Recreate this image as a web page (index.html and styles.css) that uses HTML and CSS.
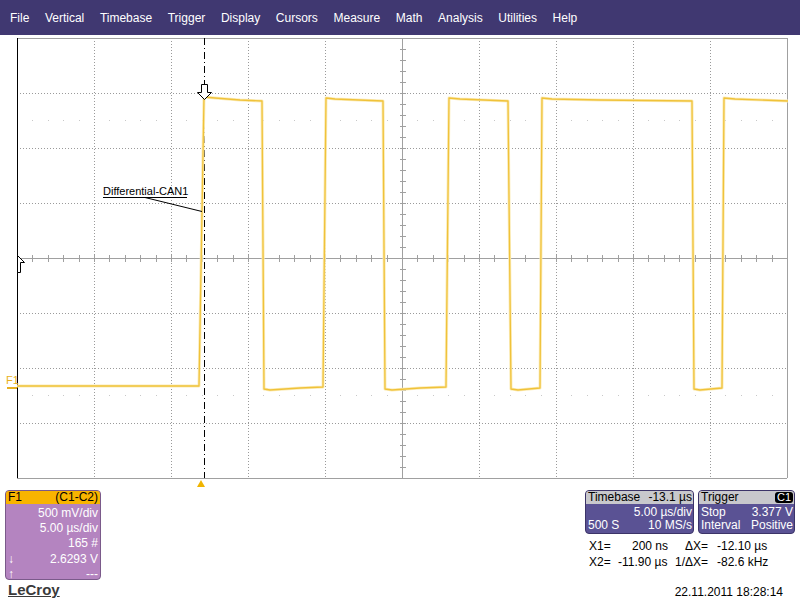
FILE: index.html
```html
<!DOCTYPE html>
<html>
<head>
<meta charset="utf-8">
<link rel="stylesheet" href="styles.css">
</head>
<body>
<div class="menubar">
  <span>File</span><span>Vertical</span><span>Timebase</span><span>Trigger</span><span>Display</span><span>Cursors</span><span>Measure</span><span>Math</span><span>Analysis</span><span>Utilities</span><span>Help</span>
</div>
<svg class="scope" width="800" height="455" viewBox="0 35 800 455" xmlns="http://www.w3.org/2000/svg">
  <g class="grid">
    <line x1="94" y1="38" x2="94" y2="478"/>
    <line x1="171" y1="38" x2="171" y2="478"/>
    <line x1="248" y1="38" x2="248" y2="478"/>
    <line x1="325" y1="38" x2="325" y2="478"/>
    <line x1="479" y1="38" x2="479" y2="478"/>
    <line x1="556" y1="38" x2="556" y2="478"/>
    <line x1="633" y1="38" x2="633" y2="478"/>
    <line x1="710" y1="38" x2="710" y2="478"/>
    <line x1="17" y1="93" x2="787" y2="93"/>
    <line x1="17" y1="148" x2="787" y2="148"/>
    <line x1="17" y1="203" x2="787" y2="203"/>
    <line x1="17" y1="313" x2="787" y2="313"/>
    <line x1="17" y1="368" x2="787" y2="368"/>
    <line x1="17" y1="423" x2="787" y2="423"/>
  </g>
  <g class="minor" id="minor"></g>
  <g class="axis">
    <line x1="17" y1="38.5" x2="787" y2="38.5"/>
    <line x1="17" y1="478.5" x2="787" y2="478.5"/>
    <line x1="787.5" y1="38" x2="787.5" y2="478"/>
    <line x1="17" y1="258.5" x2="787" y2="258.5"/>
    <line x1="402.5" y1="38" x2="402.5" y2="478"/>
  </g>
  <g class="ticks" id="ticks"></g>
  <line class="border-left" x1="17.5" y1="38" x2="17.5" y2="478"/>
  <line class="trigline" x1="204.5" y1="38" x2="204.5" y2="478"/>
  <polyline class="trace-glow" points="17,386 199,386 204,97 215,98 240,100 262,101 264,389 270,390 300,388 323,387 326,98 335,99 383,101 385,389 392,390 420,388 446,387 449,98 460,99 508,101 511,389 518,390 540,388 542,98 552,99 600,100 692,101 694,389 700,390 722,388 724,98 735,99 788,101"/>
  <polyline class="trace" points="17,386 199,386 204,97 215,98 240,100 262,101 264,389 270,390 300,388 323,387 326,98 335,99 383,101 385,389 392,390 420,388 446,387 449,98 460,99 508,101 511,389 518,390 540,388 542,98 552,99 600,100 692,101 694,389 700,390 722,388 724,98 735,99 788,101"/>
  <path class="trigarrow" d="M201.5,84.5 H207.5 V92.5 H211.5 L204.5,99.5 L197.5,92.5 H201.5 Z"/>
  <path class="gndmark" d="M17.5,255.5 L24.5,262.5 H20.5 V272.5 H17.5 Z"/>
  <polygon class="trigtri" points="197,487 201,480 205,487"/>
  <line class="f1tick" x1="7" y1="388" x2="17" y2="388"/>
  <text class="f1label" x="6" y="384">F1</text>
  <text class="tracelabel" x="103" y="195">Differential-CAN1</text>
  <line class="leader" x1="103" y1="197.5" x2="187" y2="197.5"/>
  <line class="leader" x1="145" y1="197.5" x2="202" y2="211.5"/>
</svg>
<div class="bottom">
  <div class="leftcol">
    <div class="f1panel">
      <div class="f1head"><span>F1</span><span>(C1-C2)</span></div>
      <div class="f1body">
        <div class="row right">500 mV/div</div>
        <div class="row right">5.00 µs/div</div>
        <div class="row right">165 #</div>
        <div class="row split gapped"><span>↓</span><span>2.6293 V</span></div>
        <div class="row split"><span>↑</span><span>---</span></div>
      </div>
    </div>
    <div class="logo">LeCroy</div>
  </div>
  <div class="rightcol">
    <div class="panels">
      <div class="panel tb">
        <div class="phead split"><span>Timebase</span><span>-13.1 µs</span></div>
        <div class="pbody">
          <div class="prow right">5.00 µs/div</div>
          <div class="prow split"><span>500 S</span><span>10 MS/s</span></div>
        </div>
      </div>
      <div class="panel trig">
        <div class="phead split"><span>Trigger</span><span class="badge">C1</span></div>
        <div class="pbody">
          <div class="prow split"><span>Stop</span><span>3.377 V</span></div>
          <div class="prow split"><span>Interval</span><span>Positive</span></div>
        </div>
      </div>
    </div>
    <div class="readouts">
      <span class="c1">X1=</span><span class="c2">200 ns</span><span class="c3">ΔX=</span><span class="c4">-12.10 µs</span>
      <span class="c1">X2=</span><span class="c2 b">-11.90 µs</span><span class="c3">1/ΔX=</span><span class="c4">-82.6 kHz</span>
    </div>
    <div class="date">22.11.2011 18:28:14</div>
  </div>
</div>
<script src="script.js"></script>
</body>
</html>
```

FILE: script.js
```js
(function () {
  var ns = "http://www.w3.org/2000/svg";
  var ticks = document.getElementById("ticks");
  var minor = document.getElementById("minor");
  function line(g, x1, y1, x2, y2) {
    var l = document.createElementNS(ns, "line");
    l.setAttribute("x1", x1); l.setAttribute("y1", y1);
    l.setAttribute("x2", x2); l.setAttribute("y2", y2);
    g.appendChild(l);
  }
  var k, x, y;
  for (k = 1; k < 50; k++) {
    x = Math.round(17 + 15.4 * k) + 0.5;
    line(ticks, x, 255, x, 262);
  }
  for (k = 1; k < 40; k++) {
    y = 38 + 11 * k + 0.5;
    line(ticks, 400, y, 406, y);
  }
  for (k = 1; k < 50; k++) {
    if (k % 5 === 0) continue;
    x = Math.round(17 + 15.4 * k);
    var r1 = document.createElementNS(ns, "rect");
    r1.setAttribute("x", x); r1.setAttribute("y", 120); r1.setAttribute("width", 1); r1.setAttribute("height", 1);
    minor.appendChild(r1);
    var r2 = document.createElementNS(ns, "rect");
    r2.setAttribute("x", x); r2.setAttribute("y", 395); r2.setAttribute("width", 1); r2.setAttribute("height", 1);
    minor.appendChild(r2);
  }
})();
```

FILE: styles.css
```css
html, body {
  margin: 0;
  padding: 0;
  background: #ffffff;
  width: 800px;
  height: 600px;
  overflow: hidden;
  font-family: "Liberation Sans", Arial, sans-serif;
  font-size: 12px;
}

.menubar {
  height: 35px;
  background: #403871;
  color: #ffffff;
  display: flex;
  align-items: center;
  gap: 15.6px;
  padding-left: 10px;
  box-sizing: border-box;
}

.scope {
  display: block;
}

.grid line {
  stroke: #9a9a9a;
  stroke-width: 1;
  stroke-dasharray: 1 2;
  shape-rendering: crispEdges;
}

.minor rect {
  fill: #c8c8c8;
}

.axis line {
  stroke: #a0a0a0;
  stroke-width: 1;
}

.ticks line {
  stroke: #a0a0a0;
  stroke-width: 1;
}

.border-left {
  stroke: #000000;
  stroke-width: 1;
}

.trigline {
  stroke: #000000;
  stroke-width: 1;
  stroke-dasharray: 7 3 1 3;
}

.trace-glow {
  fill: none;
  stroke: #fbecb8;
  stroke-width: 3;
  stroke-linejoin: round;
}

.trace {
  fill: none;
  stroke: #f0c23a;
  stroke-width: 1.3;
  stroke-linejoin: round;
}

.trigarrow, .gndmark {
  fill: #ffffff;
  stroke: #000000;
  stroke-width: 1;
}

.trigtri {
  fill: #f0b400;
}

.f1tick {
  stroke: #e8b020;
  stroke-width: 2;
}

.f1label {
  fill: #e8b020;
  font-family: "Liberation Sans", Arial, sans-serif;
  font-size: 11px;
}

.tracelabel {
  fill: #000000;
  font-family: "Liberation Sans", Arial, sans-serif;
  font-size: 11px;
}

.leader {
  stroke: #000000;
  stroke-width: 1;
}

.bottom {
  display: flex;
  justify-content: space-between;
  height: 110px;
}

.leftcol {
  padding-left: 5px;
  width: 97px;
}

.f1panel {
  width: 96px;
  height: 90px;
  box-sizing: border-box;
  border: 1px solid #7a5a8a;
  border-radius: 4px;
  overflow: hidden;
  background: #b484c0;
}

.f1head {
  background: #f8b400;
  color: #000000;
  height: 13px;
  line-height: 13px;
  display: flex;
  justify-content: space-between;
  padding: 0 2px 0 2px;
}

.f1body {
  color: #ffffff;
  padding: 2px 2px 0 2px;
}

.row {
  height: 15px;
  line-height: 15px;
}

.row.gapped {
  margin-top: 1px;
}

.right {
  text-align: right;
}

.split {
  display: flex;
  justify-content: space-between;
}

.logo {
  margin-left: 3px;
  margin-top: 1px;
  font-size: 15px;
  font-weight: bold;
  color: #3a3a3a;
  text-decoration: underline;
  line-height: 18px;
}

.rightcol {
  width: 215px;
}

.panels {
  display: flex;
  gap: 4px;
}

.panel {
  height: 44px;
  box-sizing: border-box;
  border: 1px solid #3c3468;
  border-radius: 4px;
  overflow: hidden;
  background: #5a5294;
  color: #ffffff;
}

.panel.tb {
  width: 109px;
}

.panel.trig {
  width: 97px;
}

.phead {
  background: #c8c8cc;
  color: #000000;
  height: 13px;
  line-height: 13px;
  padding: 0 1px 0 2px;
}

.pbody {
  padding: 2px 1px 0 2px;
}

.prow {
  height: 13px;
  line-height: 13px;
}

.badge {
  background: #000000;
  color: #ffffff;
  border-radius: 3px;
  padding: 0 2px;
  font-size: 11px;
  line-height: 11px;
  height: 11px;
  margin-top: 1px;
}

.readouts {
  display: grid;
  grid-template-columns: 29px 50px 40px auto;
  margin-top: 4px;
  padding-left: 4px;
  color: #000000;
  line-height: 16px;
  white-space: nowrap;
}

.readouts .c2 {
  text-align: right;
}

.readouts .c2.b {
  padding-right: 6px;
}

.readouts .c3 {
  text-align: right;
}

.readouts .c4 {
  padding-left: 9px;
}

.date {
  margin-top: 15px;
  text-align: right;
  padding-right: 17px;
  color: #000000;
  white-space: nowrap;
}
```
